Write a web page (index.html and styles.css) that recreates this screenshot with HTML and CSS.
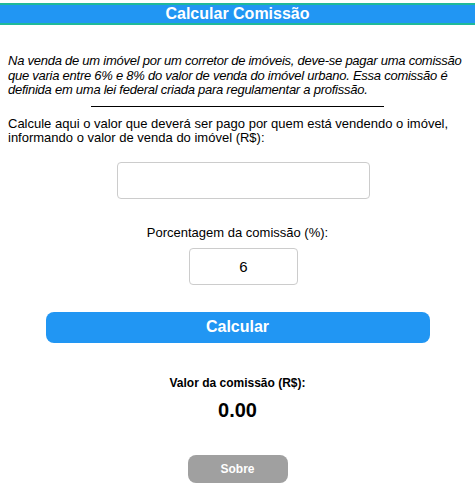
FILE: index.html
```html
<!DOCTYPE html>
<html lang="pt-BR">
<head>
    <meta charset="UTF-8">
    <meta name="viewport" content="width=device-width, initial-scale=1.0">
    <title>Calcular Comissão</title>
    <link rel="stylesheet" href="styles.css">
</head>
<body>
    <div class="header">Calcular Comissão</div>

    <div class="content">
        <p class="intro">Na venda de um imóvel por um corretor de imóveis, deve-se pagar uma comissão que varia entre 6% e 8% do valor de venda do imóvel urbano. Essa comissão é definida em uma lei federal criada para regulamentar a profissão.</p>
        <div class="divider"></div>
        <p class="info">Calcule aqui o valor que deverá ser pago por quem está vendendo o imóvel, informando o valor de venda do imóvel (R$):</p>

        <div class="field">
            <input type="text" id="valor" class="input-valor">
        </div>

        <p class="label">Porcentagem da comissão (%):</p>
        <div class="field">
            <input type="text" id="porcentagem" class="input-porc" value="6">
        </div>

        <button type="button" class="btn-calcular" onclick="calcular()">Calcular</button>

        <p class="result-label">Valor da comissão (R$):</p>
        <p class="result" id="resultado">0.00</p>

        <div class="footer">
            <button type="button" class="btn-sobre">Sobre</button>
        </div>
    </div>

    <script>
        function calcular() {
            const valor = parseFloat(document.getElementById('valor').value.replace(',', '.')) || 0;
            const porc = parseFloat(document.getElementById('porcentagem').value.replace(',', '.')) || 0;
            document.getElementById('resultado').textContent = (valor * porc / 100).toFixed(2);
        }
    </script>
</body>
</html>
```

FILE: styles.css
```css
body {
    font-family: Arial, "Liberation Sans", sans-serif;
    margin: 0;
    padding: 0;
    background: #fff;
    color: #000;
}
.header {
    margin-top: 3px;
    height: 18px;
    line-height: 18px;
    background: #2196f3;
    border-top: 2px solid #1fb99a;
    border-bottom: 2px solid #1fb99a;
    color: #fff;
    font-size: 16px;
    font-weight: bold;
    text-align: center;
}
.content {
    padding: 0 8px;
}
.intro {
    font-size: 13px;
    font-style: italic;
    letter-spacing: -0.25px;
    line-height: 14.5px;
    margin: 29px 0 0;
}
.divider {
    width: 293px;
    margin: 8px auto 0;
    border-top: 1px solid #000;
}
.info {
    font-size: 13px;
    line-height: 14.5px;
    margin: 10px 0 0;
}
.field {
    display: flex;
    justify-content: center;
    padding-left: 12px;
}
.field input {
    box-sizing: border-box;
    height: 37px;
    border: 1px solid #ccc;
    border-radius: 4px;
    font-size: 15px;
    font-family: Arial, "Liberation Sans", sans-serif;
    text-align: center;
    outline: none;
}
.input-valor {
    width: 253px;
    margin-top: 16px;
}
.input-porc {
    width: 109px;
}
.label {
    font-size: 13px;
    text-align: center;
    margin: 26px 0 8px;
}
.btn-calcular {
    display: block;
    width: 384px;
    height: 31px;
    margin: 27px auto 0;
    padding: 0;
    background: #2196f3;
    color: #fff;
    border: none;
    border-radius: 8px;
    font-family: Arial, "Liberation Sans", sans-serif;
    font-size: 16px;
    font-weight: bold;
    cursor: pointer;
}
.result-label {
    font-size: 12px;
    font-weight: bold;
    text-align: center;
    margin: 33px 0 0;
}
.result {
    font-size: 20px;
    font-weight: bold;
    text-align: center;
    margin: 9px 0 0;
}
.footer {
    display: flex;
    justify-content: center;
    margin-top: 33px;
}
.btn-sobre {
    width: 100px;
    height: 28px;
    padding: 0;
    background: #a0a0a0;
    color: #fff;
    border: none;
    border-radius: 8px;
    font-family: Arial, "Liberation Sans", sans-serif;
    font-size: 12px;
    font-weight: bold;
    cursor: pointer;
}
```
